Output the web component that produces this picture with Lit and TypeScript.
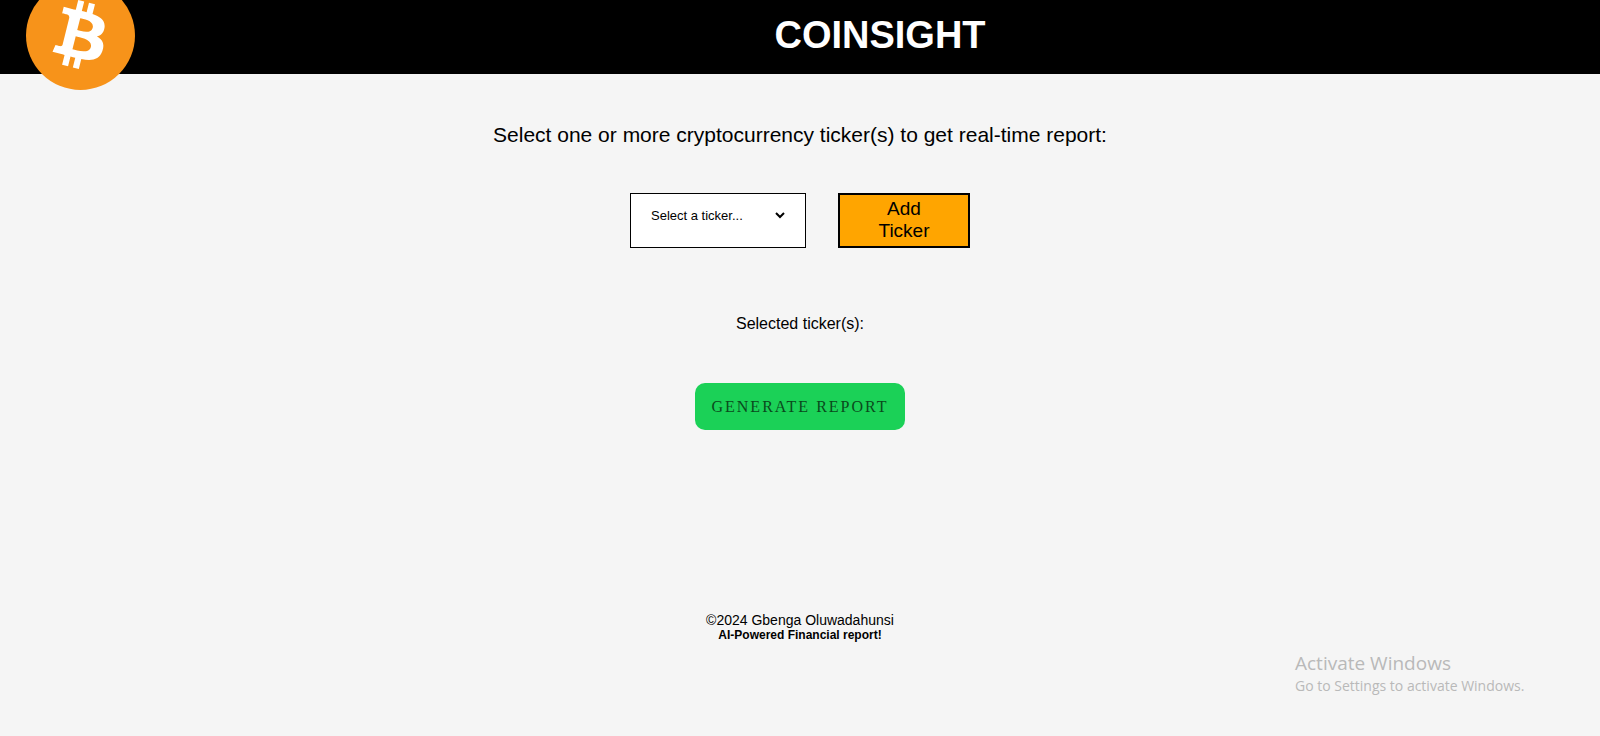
import { LitElement, html, css } from "lit";
import { customElement, state } from "lit/decorators.js";

const TICKERS = ["BTC", "ETH", "BNB", "SOL", "XRP", "ADA", "DOGE"];

@customElement("coin-logo")
class CoinLogo extends LitElement {
  static styles = css`
    :host {
      display: block;
    }
    .mark {
      display: block;
      width: 109px;
      height: 109px;
    }
  `;

  render() {
    return html`
      <svg class="mark" viewBox="0 0 64 64" role="img" aria-label="Bitcoin">
        <circle cx="32" cy="32" r="32" fill="#f7931a" />
        <path
          fill="#fff"
          d="M46.103 27.444c.637-4.258-2.605-6.547-7.038-8.074l1.438-5.768-3.511-.875-1.4 5.616c-.923-.23-1.871-.447-2.813-.662l1.41-5.653-3.509-.875-1.439 5.766c-.764-.174-1.514-.346-2.242-.527l.004-.018-4.842-1.209-.934 3.75s2.605.597 2.55.634c1.422.355 1.679 1.296 1.636 2.042l-1.638 6.571c.098.025.225.061.365.117l-.371-.092-2.296 9.205c-.174.432-.615 1.08-1.609.834.035.051-2.552-.637-2.552-.637l-1.743 4.019 4.569 1.139c.85.213 1.683.436 2.503.646l-1.453 5.834 3.507.875 1.439-5.772c.958.26 1.888.5 2.798.726l-1.434 5.745 3.511.875 1.453-5.823c5.987 1.133 10.489.676 12.384-4.739 1.527-4.36-.076-6.875-3.226-8.515 2.294-.529 4.022-2.038 4.483-5.155zM38.081 38.693c-1.085 4.36-8.426 2.003-10.806 1.412l1.928-7.729c2.38.594 10.012 1.77 8.878 6.317zm1.086-11.312c-.99 3.966-7.1 1.951-9.082 1.457l1.748-7.01c1.982.494 8.365 1.416 7.334 5.553z"
        />
      </svg>
    `;
  }
}

@customElement("app-root")
class AppRoot extends LitElement {
  @state() private choice = "";
  @state() private selected: string[] = [];

  static styles = css`
    :host {
      display: flex;
      flex-direction: column;
      min-height: 100vh;
      position: relative;
      background: #f5f5f5;
      color: #000;
      font-family: "Liberation Sans", Arial, sans-serif;
    }
    .header {
      display: grid;
      grid-template-columns: 160px 1fr;
      align-items: center;
      justify-items: center;
      height: 74px;
      background: #000;
    }
    .logo {
      margin: -24px 0 -20px;
    }
    .title {
      margin: 0;
      padding-bottom: 4px;
      color: #fff;
      font-size: 38px;
      line-height: 44px;
    }
    .main {
      display: flex;
      flex-direction: column;
      align-items: center;
      padding-top: 49px;
    }
    .lead {
      font-size: 21px;
      line-height: 24px;
    }
    .picker {
      display: flex;
      gap: 32px;
      margin-top: 46px;
    }
    .select {
      box-sizing: border-box;
      width: 176px;
      height: 55px;
      padding: 8px 36px 18px 20px;
      border: 1px solid #000;
      border-radius: 0;
      appearance: none;
      background: #fff
        url("data:image/svg+xml,%3Csvg xmlns='http://www.w3.org/2000/svg' width='10' height='8' viewBox='0 0 10 8'%3E%3Cpath d='M1 2l4 4 4-4' fill='none' stroke='%23000' stroke-width='2'/%3E%3C/svg%3E")
        no-repeat right 20px top 17px;
      color: #000;
      font: 13px "Liberation Sans", Arial, sans-serif;
    }
    .add {
      box-sizing: border-box;
      width: 132px;
      height: 55px;
      padding: 0 32px 2px;
      border: 2px solid #000;
      border-radius: 0;
      background: #ffa500;
      color: #000;
      font: 19px/22px "Liberation Sans", Arial, sans-serif;
    }
    .chosen {
      margin: 66px 0 0;
      font-size: 16px;
      line-height: 20px;
    }
    .generate {
      margin-top: 49px;
      padding: 13px 16px 12px;
      border: 0;
      border-radius: 10px;
      background: #1bd157;
      color: #0a4a1c;
      font: 16px/22px "Liberation Serif", "Times New Roman", serif;
      letter-spacing: 2px;
      text-transform: uppercase;
    }
    .footer {
      margin-top: 182px;
      text-align: center;
      font-size: 14px;
      line-height: 16px;
    }
    .tagline {
      display: block;
      font-size: 12px;
      line-height: 14px;
    }
    .notice {
      position: absolute;
      right: 65px;
      bottom: 40px;
      width: 240px;
      color: #b9b9b9;
      font-family: "Open Sans", sans-serif;
      font-size: 14px;
      line-height: 20px;
    }
    .notice-title {
      font-size: 19px;
      line-height: 26px;
    }
  `;

  private pick(event: Event) {
    this.choice = (event.target as HTMLSelectElement).value;
  }

  private add() {
    if (this.choice && !this.selected.includes(this.choice)) {
      this.selected = [...this.selected, this.choice];
    }
  }

  render() {
    return html`
      <header class="header">
        <coin-logo class="logo"></coin-logo>
        <h1 class="title">COINSIGHT</h1>
      </header>
      <main class="main">
        <label class="lead" for="ticker"
          >Select one or more cryptocurrency ticker(s) to get real-time report:</label
        >
        <div class="picker">
          <select class="select" id="ticker" @change=${this.pick}>
            <option value="">Select a ticker...</option>
            ${TICKERS.map((t) => html`<option value=${t}>${t}</option>`)}
          </select>
          <button class="add" type="button" @click=${this.add}>Add Ticker</button>
        </div>
        <p class="chosen">Selected ticker(s): ${this.selected.join(", ")}</p>
        <button class="generate" type="button">Generate Report</button>
      </main>
      <footer class="footer">
        ©2024 Gbenga Oluwadahunsi
        <strong class="tagline">AI-Powered Financial report!</strong>
      </footer>
      <aside class="notice">
        <div class="notice-title">Activate Windows</div>
        <div>Go to Settings to activate Windows.</div>
      </aside>
    `;
  }
}
